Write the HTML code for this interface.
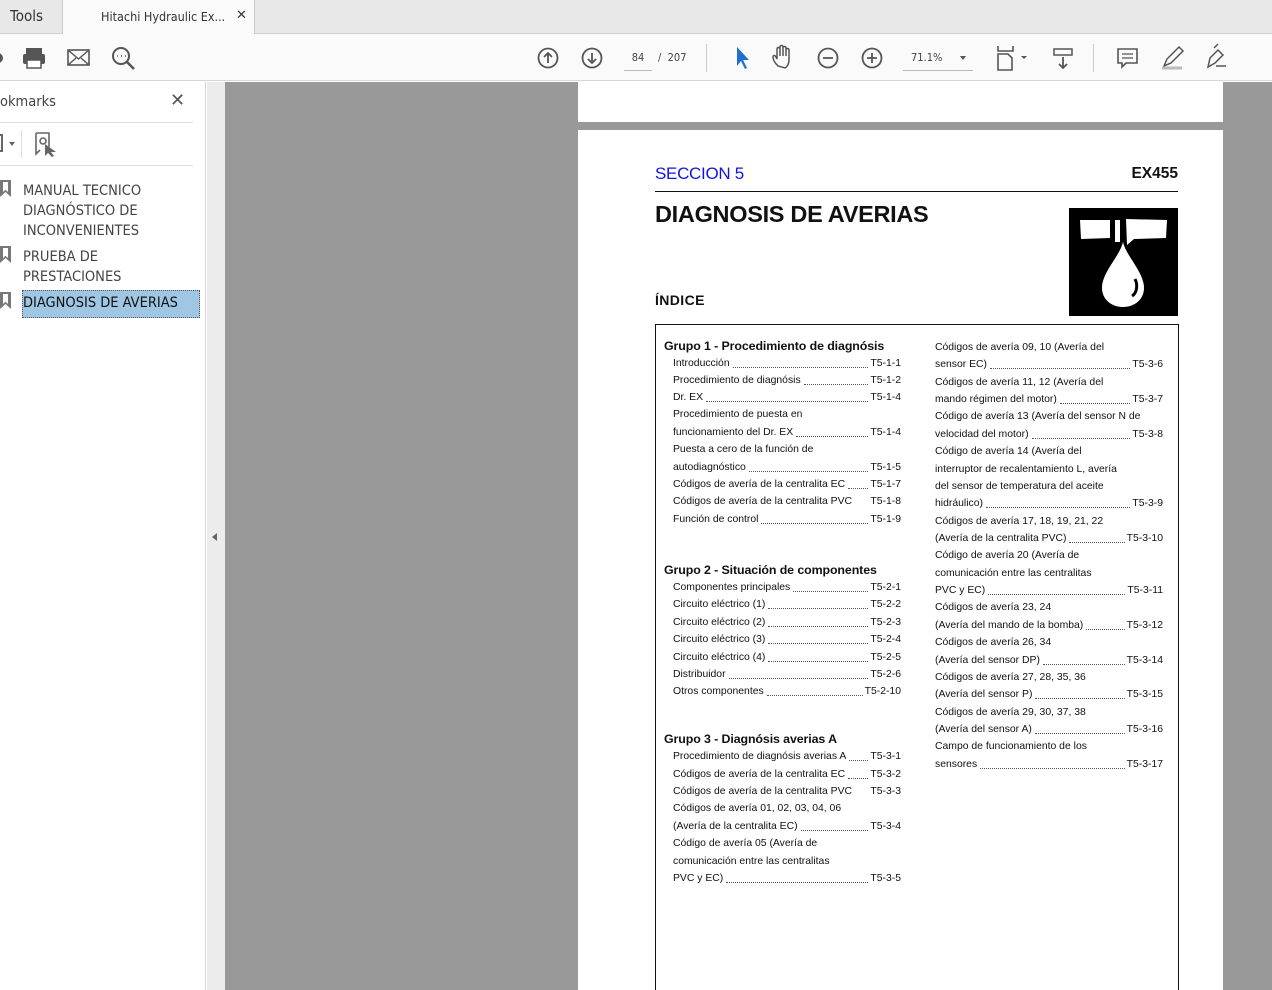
<!DOCTYPE html>
<html style="width:1272px;height:990px;overflow:hidden"><head><meta charset="utf-8"><style>
*{margin:0;padding:0;box-sizing:border-box}
body{width:1272px;height:990px;overflow:hidden;position:relative;background:#fff;font-family:"Liberation Sans",Arial,sans-serif}
.a{position:absolute}
.ui{font-family:"DejaVu Sans Condensed","Liberation Sans",sans-serif}
.l{position:absolute;width:228px;height:14px;display:flex;align-items:flex-end;font-size:10.4px;line-height:14px;color:#111;white-space:nowrap;transform:translateY(2px)}
.l i{flex:1;border-bottom:1px dotted #555;margin:0 2px 3px 3px}
.t{position:absolute;font-size:10.4px;line-height:14px;color:#111;white-space:nowrap;transform:translateY(2px)}
.g{position:absolute;font-size:12.4px;font-weight:bold;color:#111;white-space:nowrap;letter-spacing:-0.1px;transform:translateY(2px)}
.sb{position:absolute;left:23px;font-size:14.5px;color:#444;line-height:20px}
</style></head><body>
<div class="a" style="left:0;top:0;width:1272px;height:34px;background:#e8e8e8;border-bottom:1px solid #d0d0d0"></div>
<div class="a" style="left:62px;top:0;width:1px;height:34px;background:#ccc"></div>
<div class="a ui" style="left:10px;top:7px;font-size:15px;color:#333">Tools</div>
<div class="a" style="left:63px;top:0;width:192px;height:35px;background:#fafafa;border-right:1px solid #ccc"></div>
<div class="a ui" style="left:101px;top:9px;font-size:12.5px;color:#333">Hitachi Hydraulic Ex...</div>
<div class="a" style="left:236px;top:7px;font-size:13px;color:#333">✕</div>
<div class="a" style="left:0;top:34px;width:1272px;height:47px;background:#fafafa;border-bottom:1px solid #d6d6d6"></div>
<svg class="a" style="left:0;top:40px" width="260" height="36" viewBox="0 0 260 36" fill="none" stroke="#555" stroke-width="2">
<circle cx="-2" cy="18" r="4" fill="#555"/>
<rect x="26" y="8" width="16" height="6" fill="#555" stroke="none"/><rect x="23" y="14" width="22" height="10" rx="2" fill="#555" stroke="none"/><rect x="27" y="20" width="14" height="8" fill="#fff" stroke="#555" stroke-width="1.5"/>
<rect x="68" y="10" width="21" height="15" stroke-width="1.6"/><path d="M68 10l10.5 9 10.5-9M68 25l8-7M89 25l-8-7" stroke-width="1.4"/>
<circle cx="121" cy="16" r="8"/><path d="M127 22l7 7" stroke-width="2.5"/><path d="M117 16h1M121 16h1M125 16h1" stroke-width="1.5"/>
</svg>
<svg class="a" style="left:530px;top:40px" width="720" height="36" viewBox="530 40 720 36" fill="none" stroke="#555" stroke-width="1.8">
<circle cx="548" cy="58" r="9.5"/><path d="M548 63v-10M544 57l4-4 4 4"/>
<circle cx="592" cy="58" r="9.5"/><path d="M592 53v10M588 59l4 4 4-4"/>
<path d="M737 47l0 19 4-5 4 8 2-1-4-8 6 0z" fill="#1e6fd0" stroke="none"/>
<path d="M778 66c-3-3-5-6-5-9 0-2 2-2 3 0l1 2v-10c0-2 3-2 3 0v7-9c0-2 3-2 3 0v9-8c0-2 3-2 3 0v8-6c0-2 3-2 3 0v10c0 4-2 7-4 8z" stroke-width="1.5"/>
<circle cx="828" cy="58" r="9.5"/><path d="M823 58h10"/>
<circle cx="872" cy="58" r="9.5"/><path d="M867 58h10M872 53v10"/>
<path d="M960 56l3 4 3-4z" fill="#555" stroke="none"/>
<path d="M998 46v5h15v-5M998 70v-16h10l4 4v12z" stroke-width="1.6"/><path d="M1021 56l3 3 3-3z" fill="#555" stroke="none"/>
<rect x="1054" y="49" width="18" height="6" stroke-width="1.5"/><path d="M1063 57v11M1059 64l4 4 4-4"/>
<path d="M1118 49h19v14h-11l-4 4v-4h-4z" stroke-width="1.6"/><path d="M1122 54h11M1122 58h11" stroke-width="1.3"/>
<path d="M1164 66l3-7 12-12 4 4-12 12z" stroke-width="1.5"/><path d="M1162 68h20" stroke="#bbb" stroke-width="3"/>
<path d="M1208 67l2-9 8-8 5 5-8 8zM1214 48l4-4" stroke-width="1.5"/><path d="M1216 66h10" stroke-width="1.5"/>
</svg>
<div class="a ui" style="left:624px;top:51px;width:28px;text-align:center;font-size:11px;color:#444">84</div>
<div class="a" style="left:624px;top:70px;width:28px;height:1px;background:#bbb"></div>
<div class="a ui" style="left:658px;top:51px;font-size:11px;color:#444">/&nbsp;&nbsp;207</div>
<div class="a" style="left:706px;top:44px;width:1px;height:28px;background:#ccc"></div>
<div class="a ui" style="left:911px;top:51px;font-size:11px;color:#444">71.1%</div>
<div class="a" style="left:903px;top:70px;width:70px;height:1px;background:#bbb"></div>
<div class="a" style="left:1093px;top:44px;width:1px;height:28px;background:#ccc"></div>
<div class="a" style="left:0;top:82px;width:206px;height:908px;background:#fff;border-right:1px solid #d6d6d6"></div>
<div class="a ui" style="left:0;top:94px;font-size:14.5px;color:#444">okmarks</div>
<div class="a" style="left:170px;top:90px;font-size:18px;color:#555">✕</div>
<div class="a" style="left:0;top:122px;width:193px;height:1px;background:#ddd"></div>
<div class="a" style="left:0;top:165px;width:193px;height:1px;background:#ddd"></div>
<div class="a" style="left:0;top:134px;width:3px;height:18px;border:2px solid #666;border-left:none"></div>
<div class="a" style="left:9px;top:142px;border:3px solid transparent;border-top:4px solid #666"></div>
<div class="a" style="left:21px;top:130px;width:1px;height:28px;background:#ddd"></div>
<svg class="a" style="left:34px;top:132px" width="26" height="26" fill="none" stroke="#666" stroke-width="1.6"><path d="M2 1h13v14M2 1v21l4-4"/><circle cx="9" cy="9" r="3"/><path d="M11 12l0 12 3-3 4 4 2-1-3-4h5z" fill="#666" stroke="none"/></svg>
<svg class="a" style="left:0;top:180px" width="14" height="140" fill="#777"><path d="M0 0h11v17l-5.5-5-5.5 5z M3 2v10l2.5-2.3 2.5 2.3v-10z" fill-rule="evenodd"/><path d="M0 66h11v17l-5.5-5-5.5 5z M3 68v10l2.5-2.3 2.5 2.3v-10z" fill-rule="evenodd"/><path d="M0 112h11v17l-5.5-5-5.5 5z M3 114v10l2.5-2.3 2.5 2.3v-10z" fill-rule="evenodd"/></svg>
<div class="sb ui" style="top:181px">MANUAL TECNICO<br>DIAGNÓSTICO DE<br>INCONVENIENTES</div>
<div class="sb ui" style="top:247px">PRUEBA DE<br>PRESTACIONES</div>
<div class="a" style="left:22px;top:290px;width:178px;height:28px;background:#9fc6e3;border:1px dotted #555"></div>
<div class="sb ui" style="top:293px;color:#111">DIAGNOSIS DE AVERIAS</div>
<div class="a" style="left:207px;top:82px;width:18px;height:908px;background:#ececec"></div>
<div class="a" style="left:212px;top:533px;border:4px solid transparent;border-right:5px solid #666;border-left:none"></div>
<div class="a" style="left:225px;top:82px;width:1047px;height:908px;background:#999"></div>
<div class="a" style="left:578px;top:82px;width:645px;height:40px;background:#fff"></div>
<div class="a" style="left:578px;top:130px;width:645px;height:860px;background:#fff"></div>
<div class="a" style="left:655px;top:164px;font-size:17px;color:#1414e0;letter-spacing:-0.3px">SECCION 5</div>
<div class="a" style="left:1100px;top:165px;width:78px;text-align:right;font-size:15.5px;font-weight:bold;color:#111">EX455</div>
<div class="a" style="left:655px;top:191px;width:523px;height:1px;background:#111"></div>
<div class="a" style="left:655px;top:201px;font-size:23.5px;font-weight:bold;color:#111;letter-spacing:-0.3px">DIAGNOSIS DE AVERIAS</div>
<div class="a" style="left:655px;top:292px;font-size:14px;font-weight:bold;color:#111;letter-spacing:0.4px">ÍNDICE</div>
<svg class="a" style="left:1069px;top:208px" width="109" height="108" viewBox="0 0 109 108"><rect width="109" height="108" fill="#000"/><path d="M11 12l30 0 0 18-29 1z M46 12h5v22h-5z M57 11l41 1-1 18-32 1-7 6z" fill="#fff"/><path d="M54 40c-3 14-21 30-21 46 0 11 9 19 21 19s21-8 21-19c0-16-18-32-21-46z" fill="#fff" transform="translate(0,-6)"/><path d="M66 71c3 6 2 14-3 17" stroke="#000" stroke-width="3" fill="none"/></svg>
<div class="a" style="left:655px;top:324px;width:524px;height:670px;border:1px solid #111"></div>

<div class="g" style="left:664px;top:337px">Grupo 1 - Procedimiento de diagnósis</div>
<div class="l" style="left:673px;top:355px"><span>Introducción</span><i></i><span>T5-1-1</span></div>
<div class="l" style="left:673px;top:372px"><span>Procedimiento de diagnósis</span><i></i><span>T5-1-2</span></div>
<div class="l" style="left:673px;top:389px"><span>Dr. EX</span><i></i><span>T5-1-4</span></div>
<div class="t" style="left:673px;top:406px">Procedimiento de puesta en</div>
<div class="l" style="left:673px;top:424px"><span>funcionamiento del Dr. EX</span><i></i><span>T5-1-4</span></div>
<div class="t" style="left:673px;top:441px">Puesta a cero de la función de</div>
<div class="l" style="left:673px;top:459px"><span>autodiagnóstico</span><i></i><span>T5-1-5</span></div>
<div class="l" style="left:673px;top:476px"><span>Códigos de avería de la centralita EC</span><i></i><span>T5-1-7</span></div>
<div class="l" style="left:673px;top:493px"><span>Códigos de avería de la centralita PVC&nbsp;&nbsp;</span><span style="margin-left:auto">T5-1-8</span></div>
<div class="l" style="left:673px;top:511px"><span>Función de control</span><i></i><span>T5-1-9</span></div>

<div class="g" style="left:664px;top:561px">Grupo 2 - Situación de componentes</div>
<div class="l" style="left:673px;top:579px"><span>Componentes principales</span><i></i><span>T5-2-1</span></div>
<div class="l" style="left:673px;top:596px"><span>Circuito eléctrico (1)</span><i></i><span>T5-2-2</span></div>
<div class="l" style="left:673px;top:614px"><span>Circuito eléctrico (2)</span><i></i><span>T5-2-3</span></div>
<div class="l" style="left:673px;top:631px"><span>Circuito eléctrico (3)</span><i></i><span>T5-2-4</span></div>
<div class="l" style="left:673px;top:649px"><span>Circuito eléctrico (4)</span><i></i><span>T5-2-5</span></div>
<div class="l" style="left:673px;top:666px"><span>Distribuidor</span><i></i><span>T5-2-6</span></div>
<div class="l" style="left:673px;top:683px"><span>Otros componentes</span><i></i><span>T5-2-10</span></div>

<div class="g" style="left:664px;top:730px">Grupo 3 - Diagnósis averias A</div>
<div class="l" style="left:673px;top:748px"><span>Procedimiento de diagnósis averias A</span><i></i><span>T5-3-1</span></div>
<div class="l" style="left:673px;top:766px"><span>Códigos de avería de la centralita EC</span><i></i><span>T5-3-2</span></div>
<div class="l" style="left:673px;top:783px"><span>Códigos de avería de la centralita PVC&nbsp;&nbsp;</span><span style="margin-left:auto">T5-3-3</span></div>
<div class="t" style="left:673px;top:800px">Códigos de avería 01, 02, 03, 04, 06</div>
<div class="l" style="left:673px;top:818px"><span>(Avería de la centralita EC)</span><i></i><span>T5-3-4</span></div>
<div class="t" style="left:673px;top:835px">Código de avería 05 (Avería de</div>
<div class="t" style="left:673px;top:853px">comunicación entre las centralitas</div>
<div class="l" style="left:673px;top:870px"><span>PVC y EC)</span><i></i><span>T5-3-5</span></div>

<div class="t" style="left:935px;top:339px">Códigos de avería 09, 10 (Avería del</div>
<div class="l" style="left:935px;top:356px"><span>sensor EC)</span><i></i><span>T5-3-6</span></div>
<div class="t" style="left:935px;top:374px">Códigos de avería 11, 12 (Avería del</div>
<div class="l" style="left:935px;top:391px"><span>mando régimen del motor)</span><i></i><span>T5-3-7</span></div>
<div class="t" style="left:935px;top:408px">Código de avería 13 (Avería del sensor N de</div>
<div class="l" style="left:935px;top:426px"><span>velocidad del motor)</span><i></i><span>T5-3-8</span></div>
<div class="t" style="left:935px;top:443px">Código de avería 14 (Avería del</div>
<div class="t" style="left:935px;top:461px">interruptor de recalentamiento L, avería</div>
<div class="t" style="left:935px;top:478px">del sensor de temperatura del aceite</div>
<div class="l" style="left:935px;top:495px"><span>hidráulico)</span><i></i><span>T5-3-9</span></div>
<div class="t" style="left:935px;top:513px">Códigos de avería 17, 18, 19, 21, 22</div>
<div class="l" style="left:935px;top:530px"><span>(Avería de la centralita PVC)</span><i></i><span>T5-3-10</span></div>
<div class="t" style="left:935px;top:547px">Código de avería 20 (Avería de</div>
<div class="t" style="left:935px;top:565px">comunicación entre las centralitas</div>
<div class="l" style="left:935px;top:582px"><span>PVC y EC)</span><i></i><span>T5-3-11</span></div>
<div class="t" style="left:935px;top:599px">Códigos de avería 23, 24</div>
<div class="l" style="left:935px;top:617px"><span>(Avería del mando de la bomba)</span><i></i><span>T5-3-12</span></div>
<div class="t" style="left:935px;top:634px">Códigos de avería 26, 34</div>
<div class="l" style="left:935px;top:652px"><span>(Avería del sensor DP)</span><i></i><span>T5-3-14</span></div>
<div class="t" style="left:935px;top:669px">Códigos de avería 27, 28, 35, 36</div>
<div class="l" style="left:935px;top:686px"><span>(Avería del sensor P)</span><i></i><span>T5-3-15</span></div>
<div class="t" style="left:935px;top:704px">Códigos de avería 29, 30, 37, 38</div>
<div class="l" style="left:935px;top:721px"><span>(Avería del sensor A)</span><i></i><span>T5-3-16</span></div>
<div class="t" style="left:935px;top:738px">Campo de funcionamiento de los</div>
<div class="l" style="left:935px;top:756px"><span>sensores</span><i></i><span>T5-3-17</span></div>
</body></html>
